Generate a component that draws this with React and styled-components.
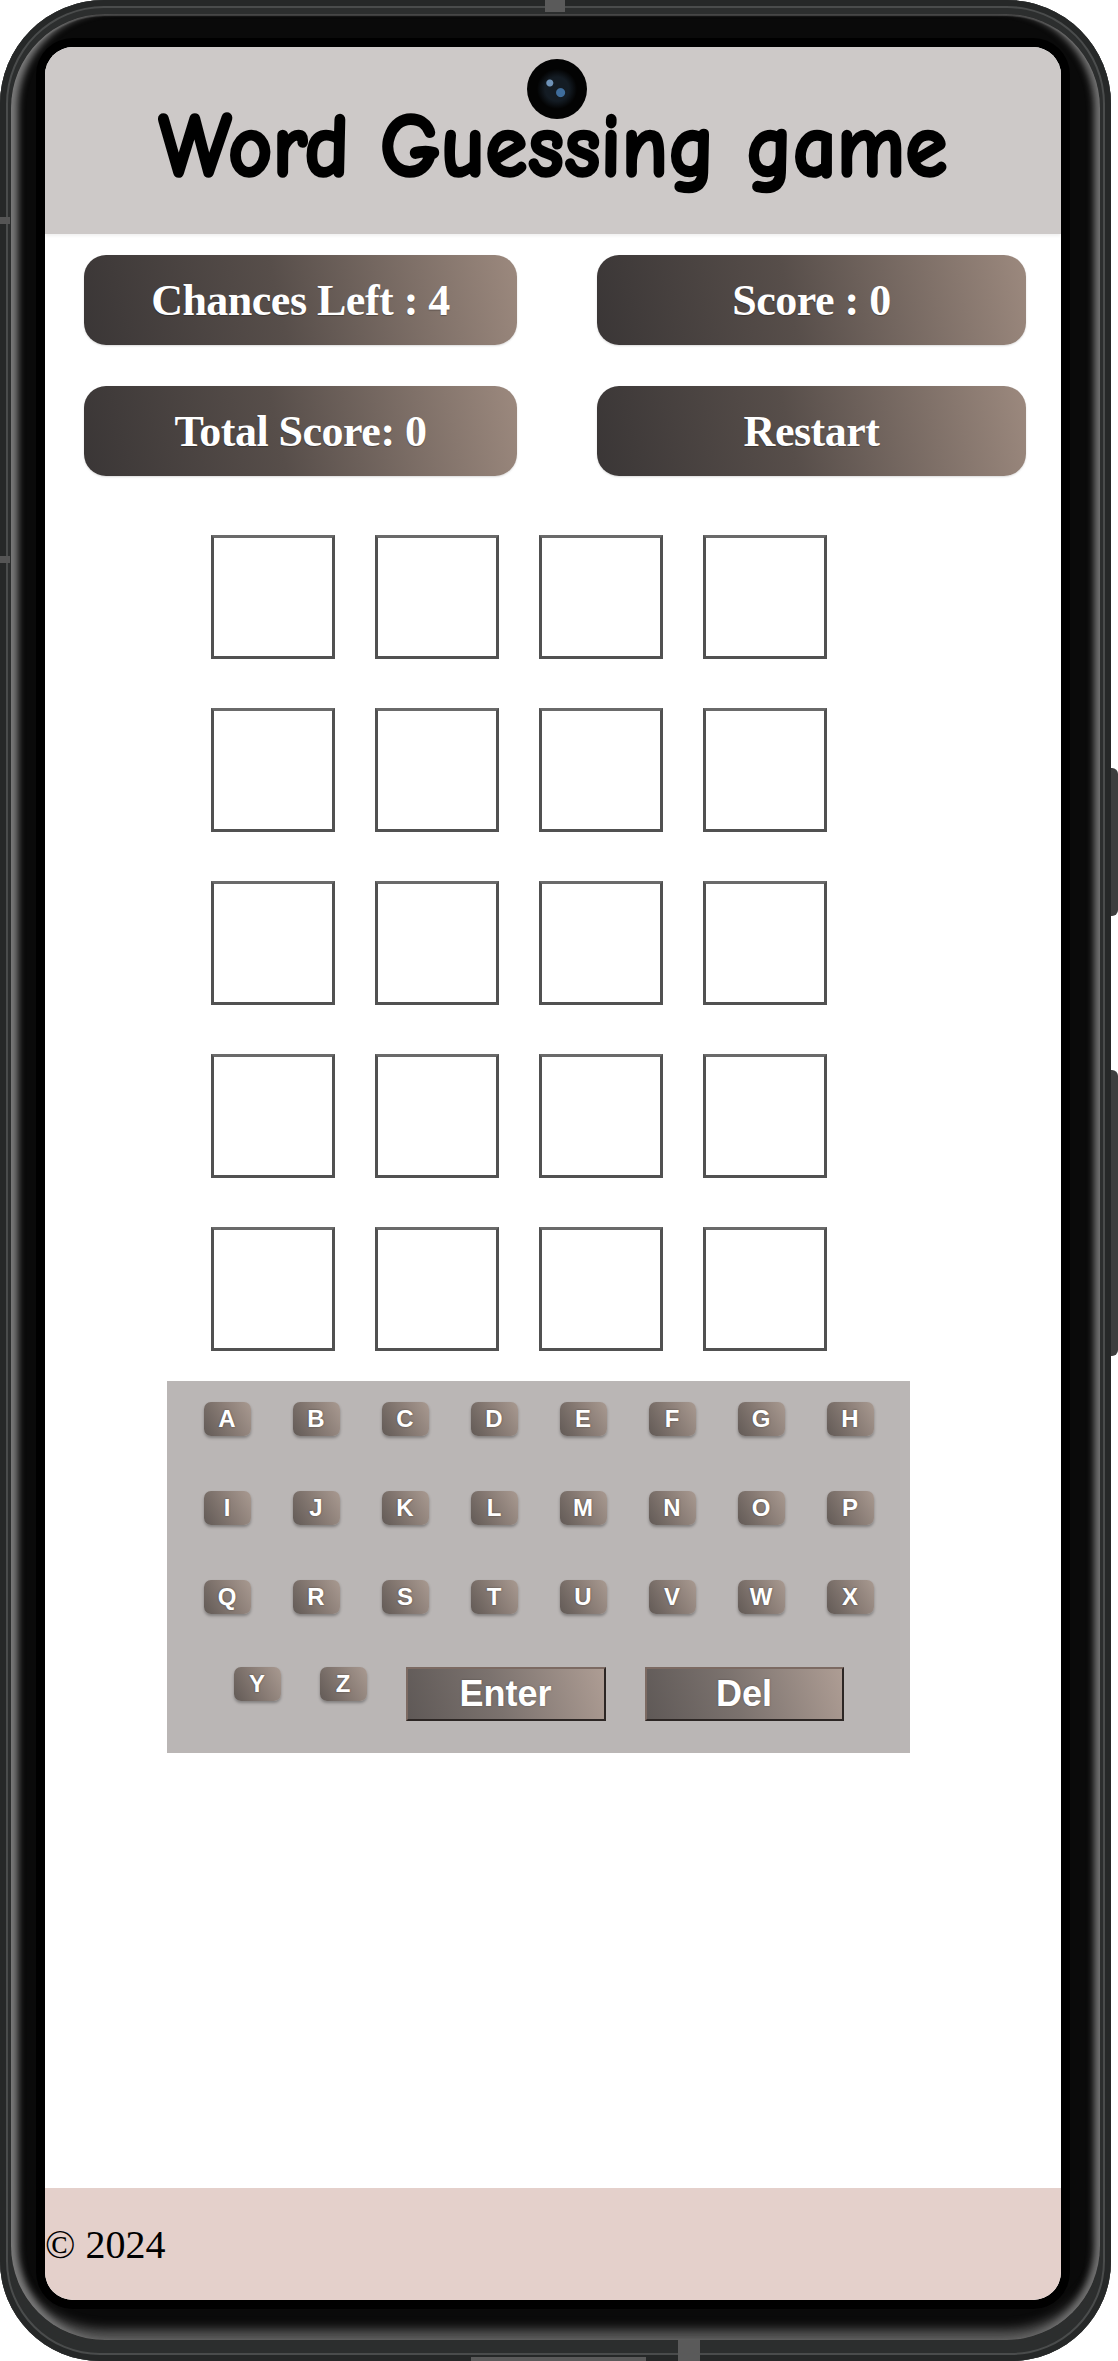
import React from "react";
import styled, { createGlobalStyle } from "styled-components";

const GlobalStyle = createGlobalStyle`
  html, body {
    margin: 0;
    padding: 0;
    background: #fff;
  }
  body {
    width: 1118px;
    height: 2361px;
    overflow: hidden;
  }
`;

const Phone = styled.div`
  position: relative;
  box-sizing: border-box;
  width: 1111px;
  height: 2361px;
  padding: 14px 11px 21px 11px;
  border-radius: 104px 104px 100px 100px;
  background: #2c2e2e;
  box-shadow: inset 0 0 0 6px #262828, inset 0 0 0 8px #4a4c4c;
`;

const Bezel = styled.div`
  box-sizing: border-box;
  height: 100%;
  padding: 33px 39px 40px 34px;
  border-radius: 94px;
  background: #0a0a0a;
  box-shadow: inset 11px 0 7px -4px #7a7a7a, inset -10px 0 7px -4px #727272,
    inset 0 -18px 12px -8px #5c5c5c, inset 0 2px 1px #3c3c3c;
`;

const SideButton = styled.div`
  position: absolute;
  right: -7px;
  top: ${props => props.$top}px;
  width: 7px;
  height: ${props => props.$h}px;
  border-radius: 0 6px 6px 0;
  background: #3e3e3e;
`;

const Mark = styled.div`
  position: absolute;
  top: ${props => props.$top}px;
  left: 0;
  width: 10px;
  height: 7px;
  background: #555;
`;

const Notch = styled.div`
  position: absolute;
  left: ${props => props.$left}px;
  top: ${props => props.$top}px;
  width: ${props => props.$w}px;
  height: ${props => props.$h}px;
  background: #5a5a5a;
`;

const Screen = styled.div`
  position: relative;
  display: flex;
  flex-direction: column;
  height: 100%;
  border-radius: 28px;
  overflow: hidden;
  background: #fff;
  box-shadow: 0 0 0 9px #000;
`;

const Camera = styled.div`
  position: absolute;
  left: 482px;
  top: 12px;
  width: 60px;
  height: 60px;
  border-radius: 50%;
  background: radial-gradient(circle at 38% 40%, #6f93b8 0 3px, transparent 4px),
    radial-gradient(circle at 56% 56%, #3f6d9c 0 4px, transparent 5px),
    radial-gradient(circle at 50% 50%, #141c24 0 12px, #030303 20px);
`;

const Header = styled.header`
  flex-shrink: 0;
  height: 187px;
  display: flex;
  align-items: center;
  justify-content: center;
  background: #cdc9c8;
  box-shadow: 0 2px 3px rgba(0, 0, 0, 0.06);
`;

const Title = styled.h1`
  margin: 12px 0 0;
  font-family: "Comic Sans MS", "Comic Neue", "DejaVu Sans", sans-serif;
  font-weight: 700;
  font-size: 86px;
  color: #000;
  -webkit-text-stroke: 2.5px #000;
  transform: scaleY(1.06);
`;

const Stats = styled.div`
  display: grid;
  grid-template-columns: 433px 429px;
  column-gap: 80px;
  row-gap: 41px;
  padding: 21px 0 0 39px;
`;

const StatButton = styled.button`
  height: 90px;
  padding: 0;
  border: 0;
  border-radius: 22px;
  background: linear-gradient(78deg, #3a3636 0%, #574e4a 45%, #9c897e 100%);
  box-shadow: 0 1px 2px rgba(0, 0, 0, 0.15);
  color: #fff;
  font-family: "Liberation Serif", "Times New Roman", serif;
  font-weight: 700;
  font-size: 44px;
  letter-spacing: -0.5px;
  text-shadow: 0 1px 1px rgba(0, 0, 0, 0.3);
`;

const Board = styled.div`
  display: grid;
  grid-template-columns: repeat(4, 124px);
  column-gap: 40px;
  row-gap: 49px;
  margin: 59px 0 0 166px;
`;

const Tile = styled.div`
  box-sizing: border-box;
  width: 124px;
  height: 124px;
  border: 3px solid #515151;
  border-top-color: #6a6a6a;
  background: #fff;
`;

const Keyboard = styled.div`
  box-sizing: border-box;
  width: 743px;
  margin: 30px 0 0 122px;
  padding: 21px 0 32px;
  display: flex;
  flex-direction: column;
  gap: 55px;
  background: #bab6b5;
`;

const KeyRow = styled.div`
  display: flex;
  justify-content: center;
  align-items: flex-start;
  gap: ${props => props.$gap}px;
  margin-top: ${props => props.$shift || 0}px;
`;

const Key = styled.button`
  width: 47px;
  height: 34px;
  padding: 0;
  border: 0;
  border-radius: 7px;
  background: linear-gradient(60deg, #625a56 0%, #8a7d76 55%, #a99a91 100%);
  box-shadow: 0 2px 3px rgba(0, 0, 0, 0.3);
  color: #fff;
  font-family: "Liberation Sans", Arial, sans-serif;
  font-weight: 700;
  font-size: 24px;
  text-shadow: 0 0 2px rgba(0, 0, 0, 0.45);
`;

const ActionKey = styled.button`
  box-sizing: border-box;
  width: ${props => props.$w}px;
  height: 54px;
  padding: 0;
  border: 2px solid;
  border-color: #7c6a62 #2c2624 #2c2624 #7c6a62;
  background: linear-gradient(72deg, #5f5957 0%, #7b726e 45%, #ae9d94 100%);
  color: #fff;
  font-family: "Liberation Sans", Arial, sans-serif;
  font-weight: 700;
  font-size: 36px;
  text-shadow: 0 0 2px rgba(0, 0, 0, 0.35);
`;

const Footer = styled.footer`
  flex-shrink: 0;
  margin-top: auto;
  height: 112px;
  display: flex;
  align-items: center;
  background: #e4d0cb;
  color: #000;
  font-family: "Liberation Serif", "Times New Roman", serif;
  font-size: 40px;
`;

const keyRows = ["ABCDEFGH", "IJKLMNOP", "QRSTUVWX"];

export default function App() {
  return (
    <>
      <GlobalStyle />
      <Phone>
        <Notch $left={545} $top={0} $w={20} $h={12} />
        <Notch $left={678} $top={2340} $w={22} $h={21} />
        <Notch $left={471} $top={2357} $w={175} $h={4} />
        <Mark $top={217} />
        <Mark $top={556} />
        <SideButton $top={768} $h={148} />
        <SideButton $top={1070} $h={286} />
        <Bezel>
          <Screen>
            <Header>
              <Title>Word Guessing game</Title>
            </Header>
            <Camera />
            <Stats>
              <StatButton>Chances Left : 4</StatButton>
              <StatButton>Score : 0</StatButton>
              <StatButton>Total Score: 0</StatButton>
              <StatButton>Restart</StatButton>
            </Stats>
            <Board>
              {Array.from({ length: 20 }).map((_, i) => (
                <Tile key={i} />
              ))}
            </Board>
            <Keyboard>
              {keyRows.map(row => (
                <KeyRow key={row} $gap={42}>
                  {row.split("").map(l => (
                    <Key key={l}>{l}</Key>
                  ))}
                </KeyRow>
              ))}
              <KeyRow $gap={39} $shift={-2}>
                <Key>Y</Key>
                <Key>Z</Key>
                <ActionKey $w={200}>Enter</ActionKey>
                <ActionKey $w={199}>Del</ActionKey>
              </KeyRow>
            </Keyboard>
            <Footer>© 2024</Footer>
          </Screen>
        </Bezel>
      </Phone>
    </>
  );
}
